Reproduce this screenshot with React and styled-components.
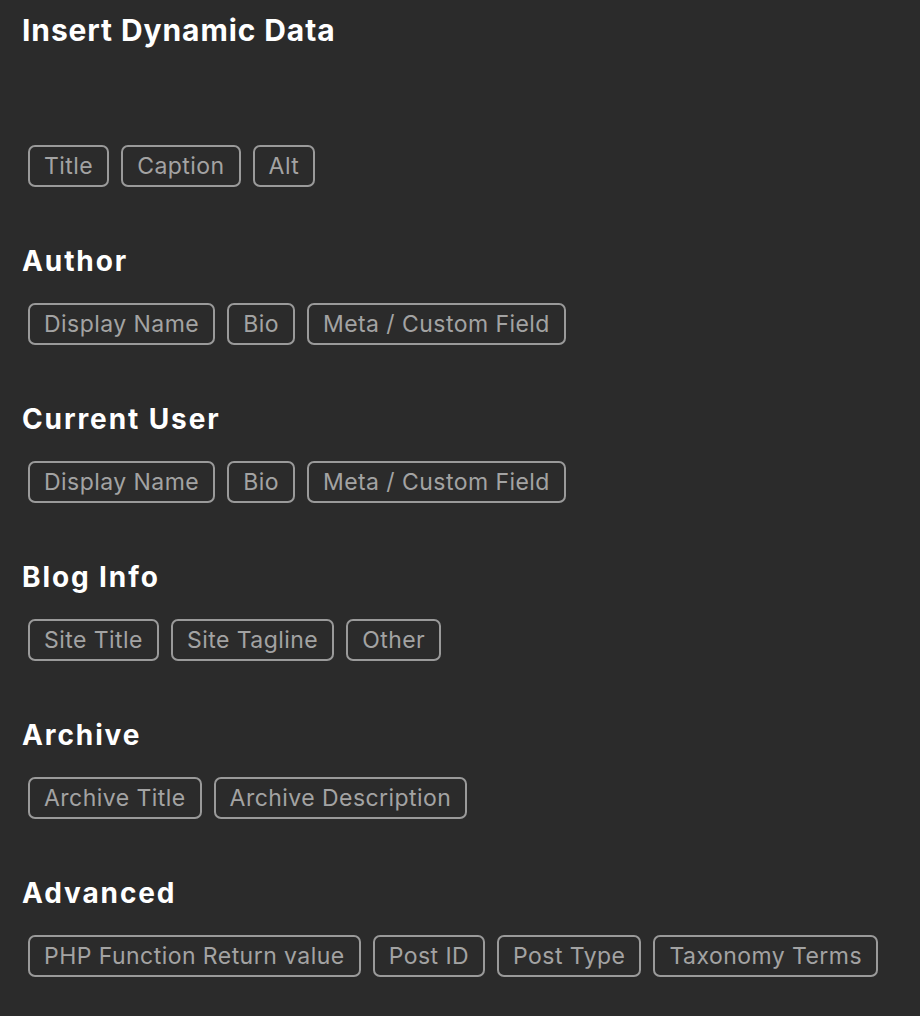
import React from "react";
import styled, { createGlobalStyle } from "styled-components";

const Global = createGlobalStyle`
  html, body { margin: 0; padding: 0; background: #2b2b2b; }
  body { font-family: Inter, "Noto Sans", sans-serif; }
`;

const Page = styled.div`
  background: #2b2b2b;
  min-height: 1016px;
  padding: 12px 22px 0;
  box-sizing: border-box;
`;

const Title = styled.h1`
  margin: 0;
  font-size: 30px;
  line-height: 36px;
  font-weight: 700;
  letter-spacing: 0.9px;
  color: #ffffff;
`;

const Section = styled.section`
  margin-top: ${(p) => p.$top}px;
`;

const Heading = styled.h2`
  margin: 0 0 25px;
  font-size: 28px;
  line-height: 34px;
  font-weight: 700;
  letter-spacing: 1.9px;
  color: #ffffff;
`;

const Row = styled.div`
  display: flex;
  flex-wrap: wrap;
  gap: 12px;
  padding-left: 6px;
`;

const Tag = styled.button`
  font-family: Inter, "Noto Sans", sans-serif;
  font-size: 23px;
  line-height: 26px;
  letter-spacing: 0.45px;
  padding: 6px 14px;
  border: 2px solid #9a9a9a;
  border-radius: 7px;
  background: transparent;
  color: #a3a3a3;
  cursor: pointer;
`;

const sections = [
  { title: null, items: ["Title", "Caption", "Alt"] },
  { title: "Author", items: ["Display Name", "Bio", "Meta / Custom Field"] },
  { title: "Current User", items: ["Display Name", "Bio", "Meta / Custom Field"] },
  { title: "Blog Info", items: ["Site Title", "Site Tagline", "Other"] },
  { title: "Archive", items: ["Archive Title", "Archive Description"] },
  { title: "Advanced", items: ["PHP Function Return value", "Post ID", "Post Type", "Taxonomy Terms"] },
];

export default function App() {
  return (
    <>
      <Global />
      <Page>
        <Title>Insert Dynamic Data</Title>
        {sections.map((s, i) => (
          <Section key={i} $top={i === 0 ? 97 : 57}>
            {s.title && <Heading>{s.title}</Heading>}
            <Row>
              {s.items.map((it) => (
                <Tag key={it}>{it}</Tag>
              ))}
            </Row>
          </Section>
        ))}
      </Page>
    </>
  );
}
